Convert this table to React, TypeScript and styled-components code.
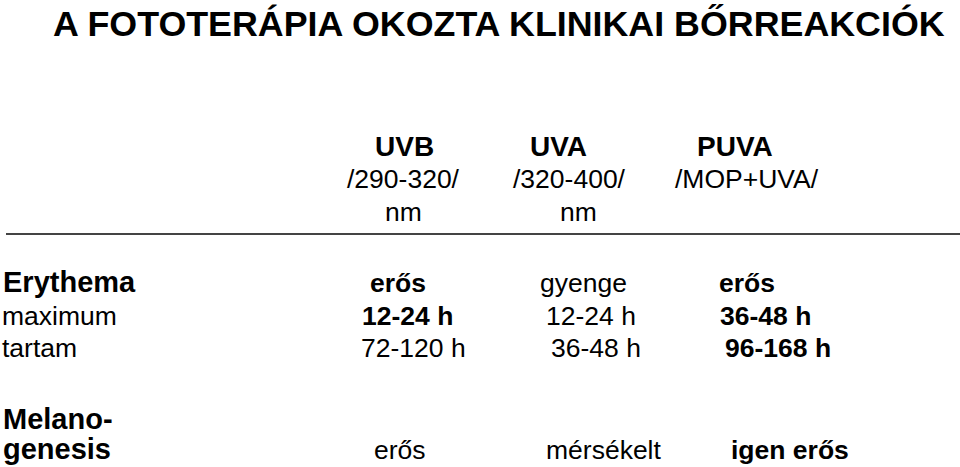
import { createGlobalStyle, styled } from 'styled-components';

const GlobalStyle = createGlobalStyle`
  html, body {
    margin: 0;
    padding: 0;
    background: #ffffff;
  }
  body {
    font-family: 'Liberation Sans', Arial, sans-serif;
    color: #000000;
  }
`;

type Col = { text: string; bold?: boolean; indent: number };
type Row = { label: string; labelBold?: boolean; cells: Col[] };

const heads = [
  { lines: [{ text: 'UVB', bold: true, indent: 35 }, { text: '/290-320/', indent: 7 }, { text: 'nm', indent: 45 }] },
  { lines: [{ text: 'UVA', bold: true, indent: 25 }, { text: '/320-400/', indent: 8 }, { text: 'nm', indent: 55 }] },
  { lines: [{ text: 'PUVA', bold: true, indent: 27 }, { text: '/MOP+UVA/', indent: 5 }] },
];

const rows: Row[] = [
  {
    label: 'Erythema',
    labelBold: true,
    cells: [
      { text: 'erős', bold: true, indent: 10 },
      { text: 'gyenge', indent: 0 },
      { text: 'erős', bold: true, indent: 1 },
    ],
  },
  {
    label: 'maximum',
    cells: [
      { text: '12-24 h', bold: true, indent: 2 },
      { text: '12-24 h', indent: 6 },
      { text: '36-48 h', bold: true, indent: 2 },
    ],
  },
  {
    label: 'tartam',
    cells: [
      { text: '72-120 h', indent: 1 },
      { text: '36-48 h', indent: 11 },
      { text: '96-168 h', bold: true, indent: 7 },
    ],
  },
];

const melanogenesis: Col[] = [
  { text: 'erős', indent: 14 },
  { text: 'mérsékelt', indent: 6 },
  { text: 'igen erős', bold: true, indent: 13 },
];

const App = () => {
  return (
    <>
      <GlobalStyle />
      <Slide>
        <Title>A FOTOTERÁPIA OKOZTA KLINIKAI BŐRREAKCIÓK</Title>
        <HeadGrid>
          <div />
          {heads.map((head, idx) => (
            <HeadCol key={idx}>
              {head.lines.map((line, i) => (
                <HeadLine key={i} $bold={line.bold} $indent={line.indent}>
                  {line.text}
                </HeadLine>
              ))}
            </HeadCol>
          ))}
        </HeadGrid>
        <Rule />
        <Body>
          {rows.map((row) => (
            <DataRow key={row.label}>
              <Label $bold={row.labelBold}>{row.label}</Label>
              {row.cells.map((cell, i) => (
                <Value key={i} $bold={cell.bold} $indent={cell.indent}>
                  {cell.text}
                </Value>
              ))}
            </DataRow>
          ))}
        </Body>
        <Melano>
          <LongRow>
            <Label $bold>Melano-</Label>
          </LongRow>
          <LongRow>
            <Label $bold>genesis</Label>
            {melanogenesis.map((cell, i) => (
              <Value key={i} $bold={cell.bold} $indent={cell.indent}>
                {cell.text}
              </Value>
            ))}
          </LongRow>
        </Melano>
      </Slide>
    </>
  );
};

export default App;

const Slide = styled.div`
  width: 960px;
  height: 467px;
  overflow: hidden;
  display: flex;
  flex-direction: column;
`;

const Title = styled.h1`
  margin: 4px 0 0;
  padding-left: 53px;
  font-size: 35.8px;
  line-height: 40px;
  font-weight: 700;
  white-space: nowrap;
`;

const HeadGrid = styled.div`
  display: grid;
  grid-template-columns: 340px 165px 165px 1fr;
  margin-top: 86px;
`;

const HeadCol = styled.div`
  display: flex;
  flex-direction: column;
`;

const HeadLine = styled.span<{ $bold?: boolean; $indent: number }>`
  font-size: ${(p) => (p.$bold ? '28px' : '26.5px')};
  font-weight: ${(p) => (p.$bold ? 700 : 400)};
  line-height: 33px;
  padding-left: ${(p) => p.$indent}px;
  white-space: nowrap;
`;

const Rule = styled.div`
  height: 2px;
  margin: 4px 0 0 6px;
  background-color: #444444;
`;

const Body = styled.div`
  margin-top: 31px;
  display: flex;
  flex-direction: column;
`;

const DataRow = styled.div`
  display: grid;
  grid-template-columns: 360px 180px 178px 1fr;
  align-items: baseline;
  line-height: 32.5px;
`;

const Melano = styled.div`
  margin-top: 39.5px;
  display: flex;
  flex-direction: column;
`;

const LongRow = styled(DataRow)`
  line-height: 30px;
`;

const Label = styled.span<{ $bold?: boolean }>`
  padding-left: ${(p) => (p.$bold ? '3px' : '2px')};
  font-size: ${(p) => (p.$bold ? '29px' : '26.5px')};
  font-weight: ${(p) => (p.$bold ? 700 : 400)};
  white-space: nowrap;
`;

const Value = styled.span<{ $bold?: boolean; $indent: number }>`
  font-size: 26.5px;
  font-weight: ${(p) => (p.$bold ? 700 : 400)};
  padding-left: ${(p) => p.$indent}px;
  white-space: nowrap;
`;
